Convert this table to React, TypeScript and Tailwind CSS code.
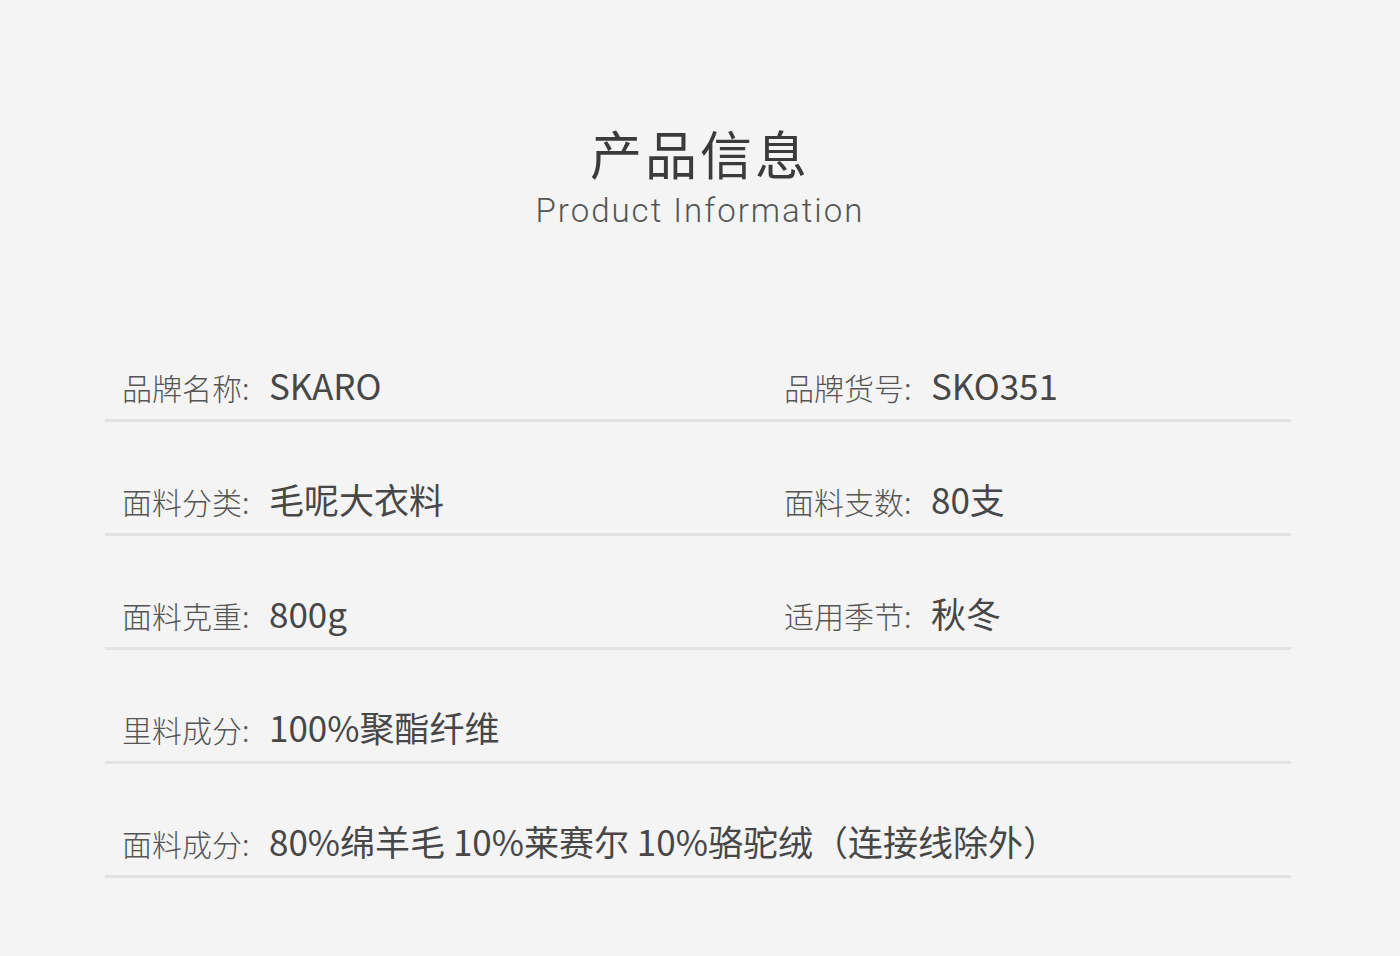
const rows: [string, string, string?, string?][] = [
  ['品牌名称:', 'SKARO', '品牌货号:', 'SKO351'],
  ['面料分类:', '毛呢大衣料', '面料支数:', '80支'],
  ['面料克重:', '800g', '适用季节:', '秋冬'],
  ['里料成分:', '100%聚酯纤维'],
  ['面料成分:', '80%绵羊毛 10%莱赛尔 10%骆驼绒（连接线除外）'],
]

const cjk = { fontFamily: '"Noto Sans CJK SC", "Noto Sans", sans-serif' }

function Field({ label, value, wide }: { label: string; value: string; wide?: boolean }) {
  return (
    <div className={wide ? 'col-span-2 flex items-baseline' : 'flex items-baseline'}>
      <span className="w-[147px] shrink-0 text-[30px] font-light text-[#555]">{label}</span>
      <span className="whitespace-nowrap text-[35px] text-[#474747]">{value}</span>
    </div>
  )
}

export default function App() {
  return (
    <div className="min-h-[956px] w-[1400px] bg-[#f4f4f4] pt-[118px]" style={cjk}>
      <div className="text-center">
        <h1 className="text-[52px] leading-[70px] tracking-[3px] text-[#3b3b3b]">产品信息</h1>
        <p
          className="mt-[3px] text-[33px] font-light leading-[40px] tracking-[2px] text-[#555]"
          style={{ fontFamily: 'Roboto, "Liberation Sans", sans-serif' }}
        >
          Product Information
        </p>
      </div>

      <div className="ml-[105px] mt-[77px] w-[1186px]">
        {rows.map(([l1, v1, l2, v2]) => (
          <div
            key={l1}
            className="grid h-[114px] grid-cols-[662px_1fr] items-end border-b-[3px] border-[#e2e2e2] pb-[8px] pl-[17px]"
          >
            <Field label={l1} value={v1} wide={!l2} />
            {l2 && v2 ? <Field label={l2} value={v2} /> : null}
          </div>
        ))}
      </div>
    </div>
  )
}
